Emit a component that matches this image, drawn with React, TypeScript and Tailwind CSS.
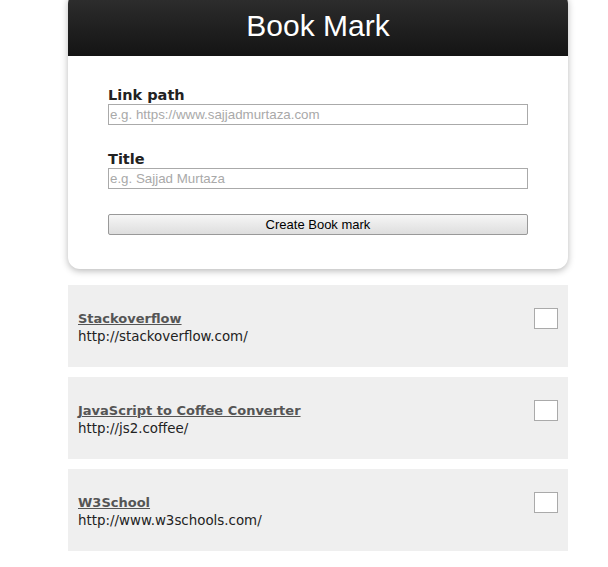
import React from "react";

const items = [
  { title: "Stackoverflow", url: "http://stackoverflow.com/" },
  { title: "JavaScript to Coffee Converter", url: "http://js2.coffee/" },
  { title: "W3School", url: "http://www.w3schools.com/" },
];

export default function App() {
  return (
    <div className="w-[608px] h-[567px] bg-white overflow-hidden">
      <div className="ml-[68px] w-[500px] mt-[-8px]">
        <div className="rounded-[12px] bg-white shadow-[0_2px_7px_rgba(0,0,0,0.28)]">
          <div className="h-[64px] pt-[4px] rounded-t-[12px] bg-gradient-to-b from-[#303030] to-[#141414] flex items-center justify-center">
            <h1 className="text-white text-[30px] leading-none font-['Liberation_Sans',Arial,sans-serif]">
              Book Mark
            </h1>
          </div>
          <div className="px-[40px] pt-[31px] pb-[34px]">
            <label className="block text-[14.5px] leading-[17px] font-bold text-[#222] font-['DejaVu_Sans',Verdana,sans-serif]">
              Link path
            </label>
            <input
              className="block w-full h-[21px] border border-[#aaa] bg-white px-[1px] text-[13.33px] font-['Liberation_Sans',Arial,sans-serif] placeholder:text-[#a9a9a9] outline-none"
              placeholder="e.g. https://www.sajjadmurtaza.com"
            />
            <label className="block mt-[26px] text-[14.5px] leading-[17px] font-bold text-[#222] font-['DejaVu_Sans',Verdana,sans-serif]">
              Title
            </label>
            <input
              className="block w-full h-[21px] border border-[#aaa] bg-white px-[1px] text-[13.33px] font-['Liberation_Sans',Arial,sans-serif] placeholder:text-[#a9a9a9] outline-none"
              placeholder="e.g. Sajjad Murtaza"
            />
            <button className="block mt-[25px] w-full h-[21px] border border-[#999] rounded-[2px] bg-gradient-to-b from-[#f6f6f6] to-[#dedede] text-[13px] leading-none text-black font-['Liberation_Sans',Arial,sans-serif]">
              Create Book mark
            </button>
          </div>
        </div>
        <div className="mt-[16px] flex flex-col gap-[10px]">
          {items.map((it) => (
            <div
              key={it.title}
              className="h-[82px] bg-[#efefef] px-[10px] pt-[23px] flex justify-between items-start"
            >
              <div className="mt-[2px] font-['DejaVu_Sans',Verdana,sans-serif] text-[13px] leading-[18px]">
                <a href="#" className="block font-bold text-[#555] underline">
                  {it.title}
                </a>
                <div className="text-[#222] text-[13.4px] leading-[17px]">{it.url}</div>
              </div>
              <span className="block w-[24px] h-[21px] border border-[#aaa] bg-white" />
            </div>
          ))}
        </div>
      </div>
    </div>
  );
}
